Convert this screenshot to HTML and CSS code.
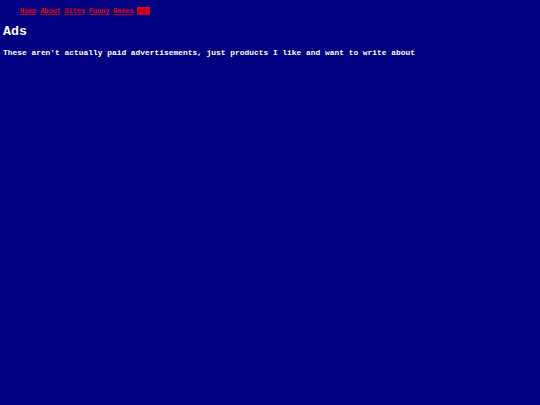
FILE: index.html
```html
<!DOCTYPE html>
<html>
<head>
<meta charset="utf-8">
<link rel="stylesheet" href="styles.css">
</head>
<body>
<nav class="nav">
<ul class="nav-list">
<li><a class="nav-link" href="#">Home</a></li>
<li><a class="nav-link" href="#">About</a></li>
<li><a class="nav-link" href="#">Sites</a></li>
<li><a class="nav-link" href="#">Funny</a></li>
<li><a class="nav-link" href="#">Games</a></li>
<li><a class="nav-link active" href="#">Ads</a></li>
</ul>
</nav>
<h1 class="title">Ads</h1>
<p class="intro">These aren't actually paid advertisements, just products I like and want to write about</p>
</body>
</html>
```
FILE: styles.css
```css
html, body {
  margin: 0;
  background: #000080;
}
body {
  padding: 0 3px;
  font-family: "Liberation Mono", "Courier New", monospace;
  font-weight: bold;
  color: #ffffff;
}
.nav-list {
  list-style: none;
  margin: 0;
  padding: 7px 0 0 17px;
  display: flex;
  gap: 3.6px;
  font-size: 6.9px;
  line-height: 9px;
}
.nav-link {
  color: #f00000;
  text-decoration: underline;
  text-decoration-color: #a00040;
}
.nav-link.active {
  background: #ff0000;
  color: #900050;
}
.title {
  font-size: 13.3px;
  margin: 8px 0 0;
  line-height: 16px;
}
.intro {
  font-size: 7.9px;
  margin: 8px 0 0;
  line-height: 10px;
}
```
